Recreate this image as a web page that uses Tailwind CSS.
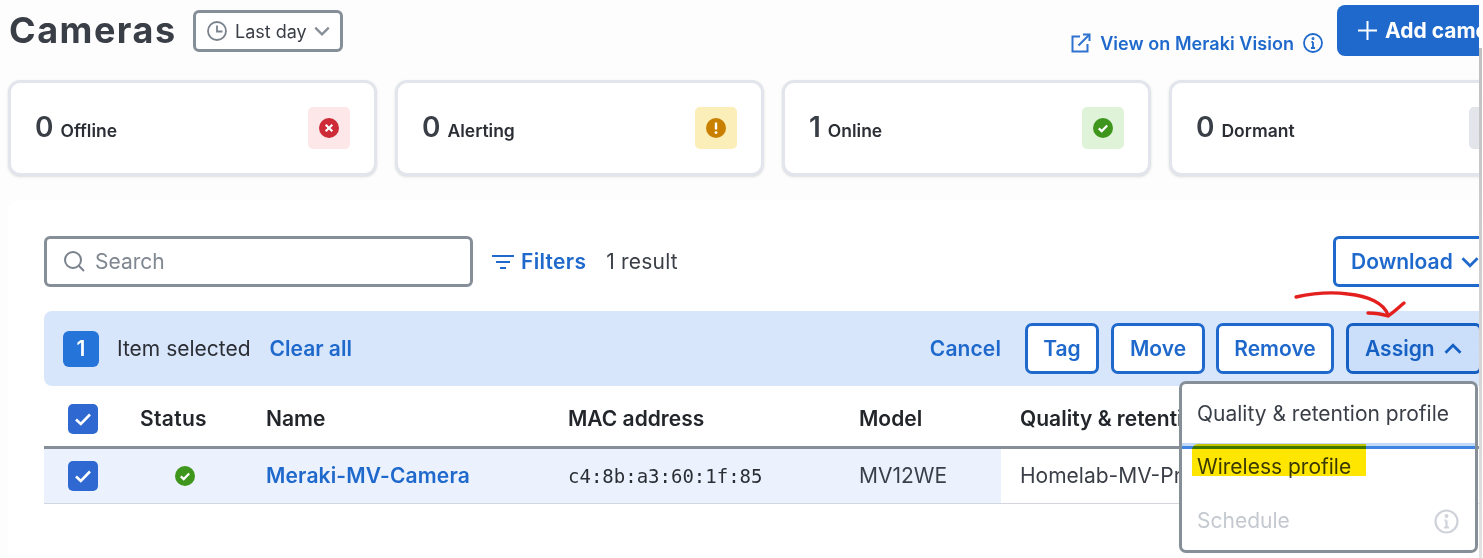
<!DOCTYPE html>
<html lang="en">
<head>
    <meta charset="UTF-8">
    <title>Cameras</title>
    <script src="https://cdn.jsdelivr.net/npm/@tailwindcss/browser@4"></script>
</head>
<body class="bg-white font-['Inter',sans-serif] text-[#2b2e34]">
<div class="relative w-[1483px] h-[558px] overflow-hidden bg-[#fdfdfd] whitespace-nowrap">
    <div class="w-[1479px] h-[558px] overflow-hidden">
        <div class="w-[1700px]">
            <!-- Header -->
            <header class="flex h-[80px] w-[1537px] pl-[9px]">
                <h1 class="mt-[8px] h-[44px] w-[184px] shrink-0 text-[36px] leading-[44px] font-bold tracking-[1.5px] text-[#3a3f47]">Cameras</h1>
                <button class="mt-[10px] flex h-[42px] w-[150px] shrink-0 items-center rounded-[6px] border-[3px] border-[#868e98] bg-white pl-[11px] text-[18px] text-[#3a3f47]">
                    <svg class="mr-[8px] size-[20px]" viewBox="0 0 20 20" fill="none" stroke="#7a828c" stroke-width="1.8"><circle cx="10" cy="10" r="9"/><path d="M10 4.5V10.5H15.5"/></svg>
                    Last day
                    <svg class="ml-[6px] size-[18px]" viewBox="0 0 16 16" fill="none" stroke="#868e98" stroke-width="2"><path d="M2 5l6 6 6-6"/></svg>
                </button>
                <a class="ml-auto mt-[31px] flex h-[24px] shrink-0 items-center text-[18px] font-semibold tracking-[0.05px] text-[#1f69cc]">
                    <svg class="mr-[9px] size-[20px]" viewBox="0 0 20 20" fill="none" stroke="#2f72d0" stroke-width="2"><path d="M9 3.5H1.5V18.5H16.5V11"/><path d="M7.5 12.5L18 2"/><path d="M12 1.5H18.5V8"/></svg>
                    View on Meraki Vision
                    <svg class="ml-[9px] size-[20px]" viewBox="0 0 20 20" fill="none" stroke="#1f69cc" stroke-width="1.8"><circle cx="10" cy="10" r="9"/><path d="M10 9v6M8 15h4M8.5 9H10"/><circle cx="10" cy="5.6" r="0.6"/></svg>
                </a>
                <button class="ml-[14px] mt-[5px] flex h-[51px] w-[200px] shrink-0 items-center rounded-[8px] bg-[#1f69cc] pl-[21px] text-[21px] font-bold text-white">
                    <svg class="mr-[8px] size-[19px]" viewBox="0 0 19 19" fill="none" stroke="white" stroke-width="2"><path d="M9.5 0v19M0 9.5h19"/></svg>
                    Add camera
                </button>
            </header>

            <!-- Stat cards -->
            <section class="flex h-[96px] gap-[18px] pl-[8px]">
                <div class="flex w-[369px] items-center justify-between rounded-[12px] border-[3px] border-[#e2e6ec] bg-white pl-[24px] pr-[24px] shadow-sm">
                    <p class="-mt-[2px] flex items-baseline"><span class="mr-[7px] text-[28px] font-semibold text-[#3a3f47]">0</span><span class="text-[17.5px] font-semibold">Offline</span></p>
                    <div class="flex size-[42px] items-center justify-center rounded-[5px] bg-[#fde7e8]">
                        <svg class="size-[20px]" viewBox="0 0 20 20"><circle cx="10" cy="10" r="10" fill="#cc2b37"/><path d="M6.7 6.7l6.6 6.6M13.3 6.7l-6.6 6.6" stroke="white" stroke-width="2.2"/></svg>
                    </div>
                </div>
                <div class="flex w-[369px] items-center justify-between rounded-[12px] border-[3px] border-[#e2e6ec] bg-white pl-[24px] pr-[24px] shadow-sm">
                    <p class="-mt-[2px] flex items-baseline"><span class="mr-[7px] text-[28px] font-semibold text-[#3a3f47]">0</span><span class="text-[17.5px] font-semibold">Alerting</span></p>
                    <div class="flex size-[42px] items-center justify-center rounded-[5px] bg-[#fbeeb8]">
                        <svg class="size-[20px]" viewBox="0 0 20 20"><circle cx="10" cy="10" r="10" fill="#c98000"/><path d="M10 4.5v7" stroke="white" stroke-width="2.4"/><circle cx="10" cy="14.6" r="1.4" fill="white"/></svg>
                    </div>
                </div>
                <div class="flex w-[369px] items-center justify-between rounded-[12px] border-[3px] border-[#e2e6ec] bg-white pl-[24px] pr-[24px] shadow-sm">
                    <p class="-mt-[2px] flex items-baseline"><span class="mr-[7px] text-[28px] font-semibold text-[#3a3f47]">1</span><span class="text-[17.5px] font-semibold">Online</span></p>
                    <div class="flex size-[42px] items-center justify-center rounded-[5px] bg-[#dff3d8]">
                        <svg class="size-[20px]" viewBox="0 0 20 20"><circle cx="10" cy="10" r="10" fill="#3f961d"/><path d="M5.8 10.4l2.9 2.7 5.5-5.6" fill="none" stroke="white" stroke-width="2.2"/></svg>
                    </div>
                </div>
                <div class="flex w-[369px] items-center justify-between rounded-[12px] border-[3px] border-[#e2e6ec] bg-white pl-[24px] pr-[24px] shadow-sm">
                    <p class="-mt-[2px] flex items-baseline"><span class="mr-[7px] text-[28px] font-semibold text-[#3a3f47]">0</span><span class="text-[17.5px] font-semibold">Dormant</span></p>
                    <div class="size-[42px] rounded-[5px] bg-[#e2e5e9]"></div>
                </div>
            </section>

            <!-- Camera list panel -->
            <section class="ml-[8px] mt-[24px] h-[358px] rounded-tl-[12px] bg-white pl-[36px] pt-[36px]">
                <div class="flex h-[51px] w-[1469px] items-center">
                    <div class="flex h-[51px] w-[429px] shrink-0 items-center rounded-[6px] border-[3px] border-[#868e98] pl-[17px] text-[21px] text-[#7f8791]">
                        <svg class="mr-[10px] size-[21px]" viewBox="0 0 21 21" fill="none" stroke="#7a828c" stroke-width="2"><circle cx="9" cy="9" r="8"/><path d="M14.8 14.8L20 20"/></svg>
                        Search
                    </div>
                    <svg class="ml-[19px] size-[22px] shrink-0" viewBox="0 0 22 22" fill="none" stroke="#1f69cc" stroke-width="2.2"><path d="M0 5h22M4 11h14M8 17h6"/></svg>
                    <span class="ml-[7px] text-[21px] font-semibold tracking-[0.3px] text-[#1f69cc]">Filters</span>
                    <span class="ml-[20px] text-[21px] tracking-[0.2px] text-[#3a3f47]">1 result</span>
                    <button class="ml-auto flex h-[51px] w-[180px] shrink-0 items-center rounded-[6px] border-[3px] border-[#1f69cc] pl-[15px] text-[21px] font-semibold text-[#1f69cc]">
                        Download
                        <svg class="ml-[7px] size-[20px]" viewBox="0 0 16 16" fill="none" stroke="#1f69cc" stroke-width="2.2"><path d="M2 5l6 6 6-6"/></svg>
                    </button>
                </div>

                <!-- Selection bar -->
                <div class="mt-[24px] flex h-[75px] w-[1438px] items-center rounded-l-[8px] bg-[#d8e6fc] pl-[19px]">
                    <span class="flex size-[36px] shrink-0 items-center justify-center rounded-[6px] bg-[#2474da] text-[21px] font-semibold text-white">1</span>
                    <span class="ml-[18px] text-[21px] text-[#2b2e34]">Item selected</span>
                    <a class="ml-[19px] text-[21px] font-semibold text-[#1f69cc]">Clear all</a>
                    <a class="ml-auto mr-[24px] text-[21px] font-semibold tracking-[0.1px] text-[#1f69cc]">Cancel</a>
                    <button class="h-[51px] w-[74px] shrink-0 rounded-[7px] border-[3px] border-[#1f69cc] bg-white text-[21px] font-semibold text-[#1f69cc]">Tag</button>
                    <button class="ml-[12px] h-[51px] w-[94px] shrink-0 rounded-[7px] border-[3px] border-[#1f69cc] bg-white text-[21px] font-semibold text-[#1f69cc]">Move</button>
                    <button class="ml-[11px] h-[51px] w-[118px] shrink-0 rounded-[7px] border-[3px] border-[#1f69cc] bg-white text-[21px] font-semibold text-[#1f69cc]">Remove</button>
                    <button class="ml-[12px] flex h-[51px] w-[136px] shrink-0 items-center rounded-[7px] border-[3px] border-[#1560c2] bg-[#cbdffb] pl-[16px] text-[21px] font-semibold text-[#1560c2]">
                        Assign
                        <svg class="ml-[8px] size-[20px]" viewBox="0 0 16 16" fill="none" stroke="#1560c2" stroke-width="2.2"><path d="M2 11l6-6 6 6"/></svg>
                    </button>
                </div>

                <!-- Table -->
                <div class="flex h-[63px] w-[1437px] items-center border-b-[3px] border-[#868e98] pt-[5px] text-[21px] font-semibold text-[#22252a]">
                    <div class="w-[76px] shrink-0 pl-[24px]">
                        <span class="flex size-[30px] items-center justify-center rounded-[5px] bg-[#3068d2]"><svg class="size-[18px]" viewBox="0 0 18 18" fill="none" stroke="white" stroke-width="2.6"><path d="M2 9.5l4.8 4.5L16 4.5"/></svg></span>
                    </div>
                    <div class="w-[107px] shrink-0 text-center tracking-[0.3px]">Status</div>
                    <div class="ml-[39px] w-[302px] shrink-0">Name</div>
                    <div class="w-[291px] shrink-0">MAC address</div>
                    <div class="w-[161px] shrink-0">Model</div>
                    <div>Quality &amp; retention profile</div>
                </div>
                <div class="flex h-[55px] w-[1437px] items-center border-b border-[#d3d7dd] text-[21px]">
                    <div class="flex h-full w-[957px] shrink-0 items-center bg-[#ebf2fe]">
                        <div class="w-[76px] shrink-0 pl-[24px]">
                            <span class="flex size-[30px] items-center justify-center rounded-[5px] bg-[#3068d2]"><svg class="size-[18px]" viewBox="0 0 18 18" fill="none" stroke="white" stroke-width="2.6"><path d="M2 9.5l4.8 4.5L16 4.5"/></svg></span>
                        </div>
                        <div class="w-[146px] shrink-0 pl-[55px]">
                            <svg class="size-[20px]" viewBox="0 0 20 20"><circle cx="10" cy="10" r="10" fill="#3f961d"/><path d="M5.8 10.4l2.9 2.7 5.5-5.6" fill="none" stroke="white" stroke-width="2.2"/></svg>
                        </div>
                        <a class="w-[302px] shrink-0 font-semibold tracking-[0.15px] text-[#1f69cc]">Meraki-MV-Camera</a>
                        <div class="w-[291px] shrink-0 font-['DejaVu_Sans_Mono',monospace] text-[19px]">c4:8b:a3:60:1f:85</div>
                        <div class="text-[#3a3f47]">MV12WE</div>
                    </div>
                    <div class="ml-[19px] text-[#3a3f47]">Homelab-MV-Profile</div>
                </div>
            </section>
        </div>
    </div>

    <!-- Assign dropdown -->
    <div class="absolute left-[1179px] top-[381px] h-[172px] w-[299px] rounded-[7px] border-[3px] border-[#868e98] bg-white text-[21px]">
        <div class="flex h-[59px] items-center pl-[15px] text-[#3a3f47]">Quality &amp; retention profile</div>
        <div class="h-[6px] border-t-[3px] border-[#c3d9f8] bg-[#3f83e3]"></div>
        <div class="flex h-[36px] items-center pl-[15px] text-[#3a3f47]">Wireless profile</div>
        <div class="flex h-[65px] items-center justify-between pl-[15px] pr-[16px] pt-[7px] text-[#c4c9d0]">
            Schedule
            <svg class="size-[25px]" viewBox="0 0 25 25" fill="none" stroke="#cfd3d9" stroke-width="2.2"><circle cx="12.5" cy="12.5" r="11"/><path d="M12.5 11.5v7M10 18.5h5M10.5 11.5h2"/><circle cx="12.5" cy="7" r="0.8"/></svg>
        </div>
    </div>

    <!-- Screenshot annotations -->
    <div class="absolute left-[1192px] top-[444px] h-[32px] w-[174px] rounded-tl-[6px] bg-[#ffe600] mix-blend-multiply"></div>
    <svg class="absolute left-[1290px] top-[285px] h-[40px] w-[120px]" viewBox="0 0 120 40" fill="none" stroke="#e4201f" stroke-width="3.4" stroke-linecap="round" stroke-linejoin="round">
        <path d="M6 12C24 8 44 7 58 9C78 11 94 18 98 30"/>
        <path d="M78 28C86 28 92 29 98 31C104 27 108 23 114 18"/>
    </svg>

    <!-- Scrollbar sliver at the window edge -->
    <div class="absolute left-[1479px] top-[48px] h-[510px] w-[3px] bg-linear-to-b from-[#c0c0c0] to-[#e2e2e2]"></div>
</div>
</body>
</html>
